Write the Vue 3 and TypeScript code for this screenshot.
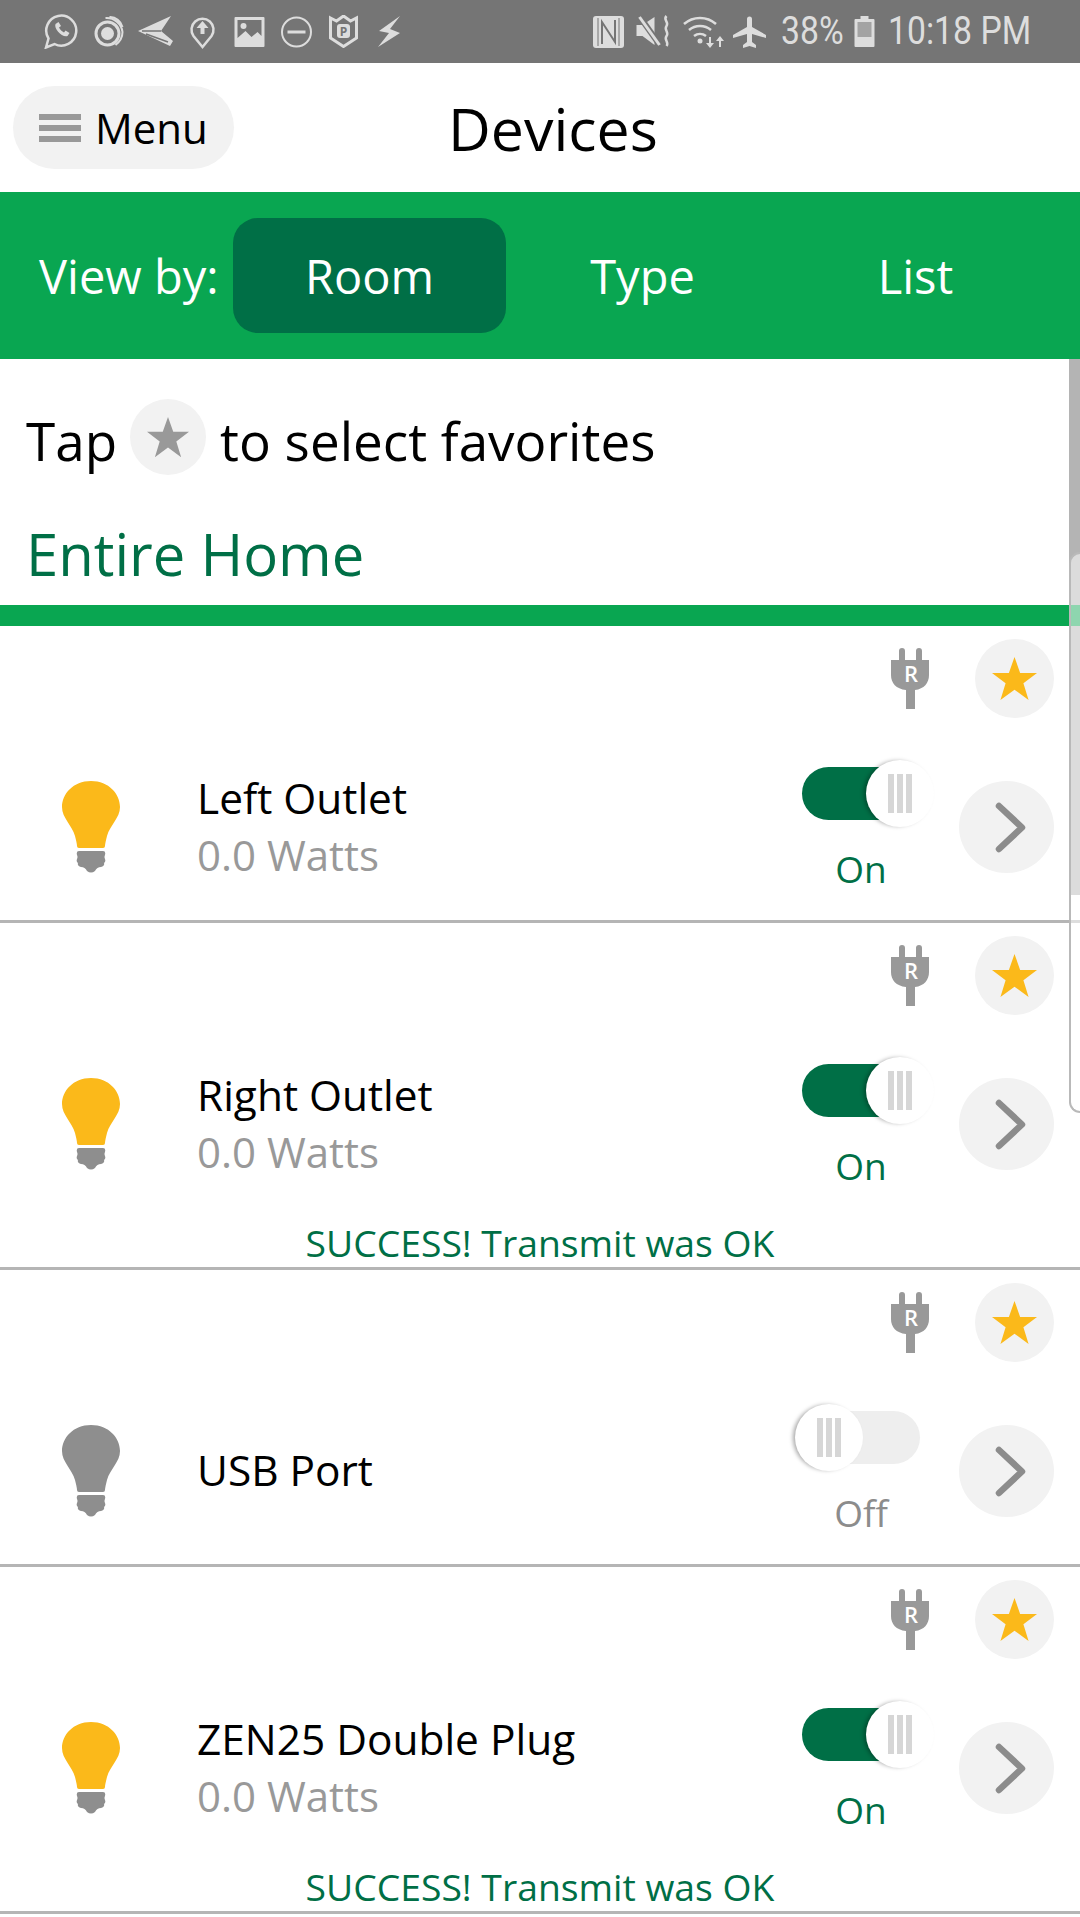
<script setup lang="ts">
interface Device {
  name: string;
  watts?: string;
  on: boolean;
  message?: string;
}

const devices: Device[] = [
  { name: "Left Outlet", watts: "0.0 Watts", on: true },
  {
    name: "Right Outlet",
    watts: "0.0 Watts",
    on: true,
    message: "SUCCESS! Transmit was OK",
  },
  { name: "USB Port", on: false },
  {
    name: "ZEN25 Double Plug",
    watts: "0.0 Watts",
    on: true,
    message: "SUCCESS! Transmit was OK",
  },
];

const starPoints = "50,2 62,36 98,36 69,58 80,94 50,72 20,94 31,58 2,36 38,36";
</script>

<template>
  <div class="page">
    <div class="status-bar">
      <div class="status-left">
        <svg class="ic" style="margin-left: 44px" width="34" height="35" viewBox="0 0 33 35">
          <path d="M1.500 33.500l2.500-9A15 15 0 1 1 10 30z" fill="none" stroke="#ddd" stroke-width="2.500" />
          <path d="M11 10c-2 5 7 14 12 12l2-3-4-2.500-1.500 2c-2-1-4-3-5-5l2-1.500-2.500-4z" fill="#ddd" />
        </svg>
        <svg class="ic" style="margin-left: 15px" width="31" height="32" viewBox="0 0 30 32">
          <circle cx="14" cy="17.500" r="11.500" fill="none" stroke="#ddd" stroke-width="3" />
          <circle cx="14" cy="17.500" r="6.500" fill="#ddd" />
          <path d="M12 2a16 16 0 0 1 17 14c0 6-3 10-7 13M16 1a13 13 0 0 1 13 10" fill="none" stroke="#ddd" stroke-width="2" />
        </svg>
        <svg class="ic" style="margin-left: 14px" width="36" height="31" viewBox="0 0 36 31">
          <path d="M0 15L33 0 23 15l12 10-3 5z" fill="#ddd" />
          <path d="M4 15h19M8 18l22 8" stroke="#757575" stroke-width="1.500" />
        </svg>
        <svg class="ic" style="margin-left: 15px" width="27" height="34" viewBox="0 0 25 34">
          <path d="M12.500 32L3.500 21A11 11 0 1 1 21.500 21z" fill="none" stroke="#ddd" stroke-width="2.500" />
          <path d="M12.500 6l6 7h-4v6h-4v-6h-4z" fill="#ddd" />
        </svg>
        <svg class="ic" style="margin-left: 18px" width="31" height="30" viewBox="0 0 30 30">
          <path d="M1 0h28a1 1 0 0 1 1 1v28a1 1 0 0 1-1 1H1a1 1 0 0 1-1-1V1a1 1 0 0 1 1-1zM3 3v18l8-7 6 6 6-5 4 4V3z" fill="#ddd" fill-rule="evenodd" />
          <circle cx="9" cy="9" r="3" fill="#ddd" />
        </svg>
        <svg class="ic" style="margin-left: 15px" width="33" height="32" viewBox="0 0 32 32">
          <circle cx="16" cy="16" r="14.500" fill="none" stroke="#ddd" stroke-width="2" />
          <rect x="7" y="14.500" width="18" height="3" fill="#ddd" />
        </svg>
        <svg class="ic" style="margin-left: 16px" width="29" height="33" viewBox="0 0 29 33">
          <path d="M1.500 3l6 3 7-5 7 5 6-3v20l-13 8.500-13-8.500z" fill="none" stroke="#ddd" stroke-width="3" />
          <rect x="8" y="9" width="13" height="14" rx="3" fill="#ddd" />
          <text x="14.500" y="20.500" class="shield-p">P</text>
        </svg>
        <svg class="ic" style="margin-left: 20px" width="23" height="32" viewBox="0 0 23 32">
          <path d="M22 0L1 15l10 2L0 31l22-14-10-4z" fill="#ddd" />
        </svg>
      </div>
      <div class="status-right">
        <svg class="ic" width="31" height="32" viewBox="0 0 31 32">
          <rect width="31" height="32" rx="3" fill="#ddd" />
          <path d="M5 2v28M26 2v28" stroke="#757575" stroke-width="1" />
          <path d="M9 28V6l13 20V4" fill="none" stroke="#757575" stroke-width="2" />
        </svg>
        <svg class="ic" style="margin-left: 12px" width="35" height="33" viewBox="0 0 34 33">
          <path d="M0 10h6L18 2v28L6 21H0z" fill="#ddd" />
          <path d="M2 0l22 31" stroke="#757575" stroke-width="6" />
          <path d="M3 2l20 28" stroke="#ddd" stroke-width="3" />
          <path d="M30 1c-4 4 3 6 0 10s3 6 0 10 3 6 0 10" fill="none" stroke="#ddd" stroke-width="2.500" />
        </svg>
        <svg class="ic" style="margin-left: 12px" width="42" height="33" viewBox="0 0 42 33">
          <path d="M1 9a24 24 0 0 1 32 0M6 15a17 17 0 0 1 22 0M11 21a10 10 0 0 1 12 0" fill="none" stroke="#ddd" stroke-width="2.500" />
          <circle cx="17" cy="26" r="2.500" fill="#ddd" />
          <path d="M26 22v6h-3l4 5 4-5h-3v-6zM36 32v-6h-3l4-5 4 5h-3v6z" fill="#ddd" />
        </svg>
        <svg class="ic" style="margin-left: 8px" width="33" height="32" viewBox="0 0 33 32">
          <path d="M14 3a2.500 2.500 0 0 1 5 0v8l14 8v3l-14-4v8l4 3v3l-6.500-2L10 32v-3l4-3v-8L0 22v-3l14-8z" fill="#ddd" />
        </svg>
        <span class="status-text pct"><b>38%</b></span>
        <svg class="ic" style="margin-left: 13px" width="21" height="31" viewBox="0 0 20 31">
          <path d="M6 0h8v3h5a1 1 0 0 1 1 1v26a1 1 0 0 1-1 1H1a1 1 0 0 1-1-1V4a1 1 0 0 1 1-1h5z" fill="#ddd" />
          <rect x="3" y="6" width="14" height="15" fill="#a3a3a3" />
        </svg>
        <span class="status-text time"><b>10:18 PM</b></span>
      </div>
    </div>

    <header class="app-header">
      <button class="menu-btn">
        <span class="burger"><i></i><i></i><i></i></span>
        <span>Menu</span>
      </button>
      <h1>Devices</h1>
    </header>

    <nav class="view-bar">
      <span class="view-label">View by:</span>
      <span class="tab active">Room</span>
      <span class="tab">Type</span>
      <span class="tab">List</span>
    </nav>

    <div class="hint">
      <span>Tap</span>
      <span class="hint-star">
        <svg width="44" height="42" viewBox="0 0 100 96">
          <polygon :points="starPoints" fill="#999" />
        </svg>
      </span>
      <span>to select favorites</span>
    </div>

    <h2 class="section-title">Entire Home</h2>
    <div class="section-line"></div>

    <div v-for="d in devices" :key="d.name" class="device">
      <div class="device-top">
        <svg class="plug" width="38" height="61" viewBox="0 0 38 61">
          <path d="M8 3a3 3 0 0 1 6 0v9h11V3a3 3 0 0 1 6 0v9h7v15c0 8-5 14-14 15v19h-9V42C5 41 0 35 0 27V12h8z" fill="#999" />
          <text x="20" y="34" class="plug-r">R</text>
        </svg>
        <span class="fav">
          <svg width="47" height="45" viewBox="0 0 100 96">
            <polygon :points="starPoints" fill="#fbb91a" />
          </svg>
        </span>
      </div>

      <div class="device-main">
        <svg class="bulb" width="58" height="92" viewBox="0 0 58 92">
          <path
            d="M29 0C47 0 58 13 58 26C58 37 48 44 45 55C44 59 43 63 43 65Q43 67 41 67H17Q15 67 15 65C15 63 14 59 13 55C10 44 0 37 0 26C0 13 11 0 29 0Z"
            :fill="d.on ? '#fbb91a' : '#8e8e8e'"
          />
          <path
            d="M17 70H41Q44 70 43 74Q42 76 43 78Q44 81 42 82Q43 85 39 86Q35 86 33 90Q29 93 25 90Q23 86 19 86Q15 85 16 82Q14 81 15 78Q16 76 15 74Q14 70 17 70Z"
            fill="#8e8e8e"
          />
        </svg>
        <div class="device-text">
          <div class="device-name">{{ d.name }}</div>
          <div v-if="d.watts" class="device-watts">{{ d.watts }}</div>
        </div>
        <div class="switch-box" :class="{ off: !d.on }">
          <div class="track">
            <div class="knob"><i></i><i></i><i></i></div>
          </div>
          <div class="switch-label">{{ d.on ? "On" : "Off" }}</div>
        </div>
        <span class="go">
          <svg width="31" height="51" viewBox="0 0 31 51">
            <path d="M4 4l23 21.500L4 47" fill="none" stroke="#8c8c8c" stroke-width="6.500" stroke-linecap="round" stroke-linejoin="round" />
          </svg>
        </span>
      </div>

      <div v-if="d.message" class="device-msg">{{ d.message }}</div>
    </div>

    <div class="scroll-thumb"></div>
    <div class="edge-handle"></div>
  </div>
</template>

<style scoped>
.page {
  position: relative;
  width: 1080px;
  height: 1917px;
  overflow: hidden;
  background: #fff;
  font-family: "Open Sans", sans-serif;
  color: #000;
}

.status-bar {
  display: flex;
  justify-content: space-between;
  align-items: center;
  height: 63px;
  background: #757575;
}

.status-left {
  display: flex;
  align-items: center;
}

.status-right {
  display: flex;
  align-items: center;
  padding-right: 51px;
}

.ic {
  display: block;
}

.status-text {
  display: block;
  height: 63px;
  font-family: Roboto, sans-serif;
  font-size: 39px;
  line-height: 63px;
  color: #ddd;
  white-space: nowrap;
}

.status-text b {
  display: inline-block;
  font-weight: 400;
  transform: scaleX(0.865);
  transform-origin: left center;
}

.pct {
  width: 60px;
  margin-left: 15px;
}

.time {
  width: 141px;
  margin-left: 13px;
}

.shield-p {
  font-family: "Open Sans", sans-serif;
  font-size: 12px;
  font-weight: 700;
  fill: #757575;
  text-anchor: middle;
}

.app-header {
  display: flex;
  align-items: center;
  height: 129px;
  padding-left: 13px;
}

.menu-btn {
  display: flex;
  align-items: center;
  gap: 14px;
  width: 221px;
  height: 83px;
  padding: 0 0 0 26px;
  border: none;
  border-radius: 42px;
  background: #f2f2f2;
  font-family: inherit;
  font-size: 42px;
  color: #000;
}

.burger {
  display: flex;
  flex-direction: column;
  gap: 5px;
  width: 42px;
}

.burger i {
  display: block;
  height: 6px;
  background: #999;
}

h1 {
  margin: 0 0 0 214px;
  font-size: 59px;
  font-weight: 400;
}

.view-bar {
  display: flex;
  align-items: center;
  height: 167px;
  padding-left: 39px;
  background: #09a651;
  color: #fff;
  font-size: 47px;
}

.view-label {
  width: 194px;
  white-space: nowrap;
}

.tab {
  display: flex;
  align-items: center;
  justify-content: center;
  width: 273px;
  height: 115px;
}

.tab.active {
  background: #006f46;
  border-radius: 25px;
}

.hint {
  display: flex;
  align-items: center;
  height: 163px;
  padding-left: 26px;
  font-size: 53px;
}

.hint-star {
  display: flex;
  align-items: center;
  justify-content: center;
  width: 76px;
  height: 76px;
  margin: -8px 14px 0 13px;
  border-radius: 50%;
  background: #f2f2f2;
}

.section-title {
  height: 83px;
  margin: 0;
  padding-left: 26px;
  font-size: 58px;
  font-weight: 400;
  line-height: 63px;
  color: #006f46;
}

.section-line {
  position: relative;
  z-index: 1;
  height: 21px;
  background: #09a651;
}

.device {
  padding-top: 13px;
  border-bottom: 3px solid #b5b5b5;
}

.device-top {
  display: flex;
  justify-content: flex-end;
  align-items: center;
  height: 79px;
  padding-right: 26px;
}

.plug {
  margin-right: 46px;
}

.fav {
  display: flex;
  align-items: center;
  justify-content: center;
  width: 79px;
  height: 79px;
  border-radius: 50%;
  background: #f2f2f2;
}

.device-main {
  display: flex;
  align-items: center;
  height: 92px;
  margin-top: 63px;
  padding-bottom: 47px;
}

.bulb {
  flex: none;
  margin-left: 62px;
}

.device-text {
  flex: 1;
  margin: -2px 0 0 77px;
}

.device-name {
  font-size: 42.4px;
  line-height: 58px;
}

.device-watts {
  font-size: 42px;
  line-height: 56px;
  color: #999;
}

.switch-box {
  flex: none;
  width: 118px;
  height: 128px;
  margin-right: 39px;
  padding-top: 4px;
  box-sizing: border-box;
}

.track {
  position: relative;
  height: 53px;
  border-radius: 27px;
  background: #006f46;
}

.switch-box.off .track {
  background: #eee;
}

.knob {
  position: absolute;
  top: -7px;
  right: -14px;
  display: flex;
  justify-content: center;
  align-items: center;
  gap: 3px;
  width: 68px;
  height: 67px;
  border-radius: 50%;
  background: #fff;
  box-shadow: -3px 0 4px -1px rgba(0, 0, 0, 0.35);
}

.switch-box.off .knob {
  right: auto;
  left: -7px;
}

.knob i {
  width: 6px;
  height: 39px;
  background: #d6d6d6;
}

.switch-label {
  margin-top: 26px;
  text-align: center;
  font-size: 37px;
  line-height: 46px;
  color: #006f46;
}

.switch-box.off .switch-label {
  color: #8c8c8c;
}

.go {
  flex: none;
  display: flex;
  align-items: center;
  justify-content: center;
  width: 95px;
  height: 92px;
  margin-right: 26px;
  border-radius: 50%;
  background: #f2f2f2;
}

.go svg {
  margin-left: 8px;
}

.device-msg {
  height: 47px;
  margin-top: 3px;
  text-align: center;
  font-size: 37.3px;
  line-height: 46px;
  color: #006f46;
}

.scroll-thumb {
  position: absolute;
  top: 359px;
  right: 0;
  width: 11px;
  height: 536px;
  background: #b4b4b4;
}

.edge-handle {
  position: absolute;
  z-index: 2;
  top: 552px;
  right: 0;
  width: 11px;
  height: 561px;
  box-sizing: border-box;
  border: 2px solid #b9b9b9;
  border-right: none;
  border-radius: 12px 0 0 12px;
  background: rgba(255, 255, 255, 0.54);
}

.plug-r {
  font-family: "Open Sans", sans-serif;
  font-size: 22px;
  font-weight: 600;
  fill: #fff;
  text-anchor: middle;
}
</style>
